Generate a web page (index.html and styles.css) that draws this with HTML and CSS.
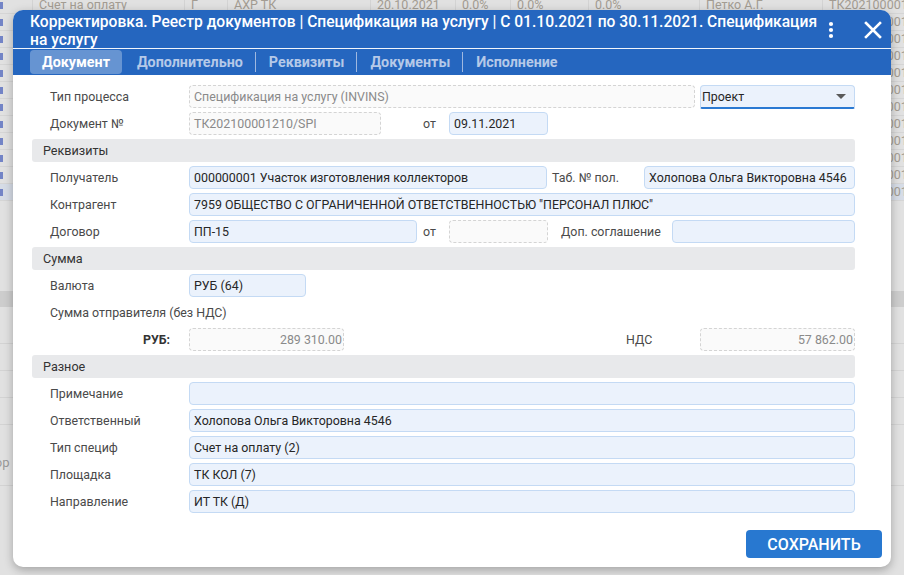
FILE: index.html
```html
<!DOCTYPE html>
<html lang="ru">
<head>
<meta charset="utf-8">
<title>Корректировка</title>
<link rel="stylesheet" href="styles.css">
</head>
<body>
<div class="page">
  <div class="grid">
    <div class="grow"><span class="mk"></span><span>Счет на оплату</span><span>Г</span><span>АХР ТК</span><span>20.10.2021</span><span>0.0%</span><span>0.0%</span><span>0.0%</span><span>Петко А.Г.</span><span>ТК202100001</span></div>
    <div class="grow"><span class="mk"></span><span>Счет на оплату</span><span>Г</span><span>АХР ТК</span><span>20.10.2021</span><span>0.0%</span><span>0.0%</span><span>0.0%</span><span>Петко А.Г.</span><span>ТК202100001</span></div>
    <div class="grow"><span class="mk"></span><span>Счет на оплату</span><span>Г</span><span>АХР ТК</span><span>20.10.2021</span><span>0.0%</span><span>0.0%</span><span>0.0%</span><span>Петко А.Г.</span><span>ТК202100001</span></div>
    <div class="grow"><span class="mk"></span><span>Счет на оплату</span><span>Г</span><span>АХР ТК</span><span>20.10.2021</span><span>0.0%</span><span>0.0%</span><span>0.0%</span><span>Петко А.Г.</span><span>ТК202100001</span></div>
    <div class="grow"><span class="mk"></span><span>Счет на оплату</span><span>Г</span><span>АХР ТК</span><span>20.10.2021</span><span>0.0%</span><span>0.0%</span><span>0.0%</span><span>Петко А.Г.</span><span>ТК202100001</span></div>
    <div class="grow"><span class="mk"></span><span>Счет на оплату</span><span>Г</span><span>АХР ТК</span><span>20.10.2021</span><span>0.0%</span><span>0.0%</span><span>0.0%</span><span>Петко А.Г.</span><span>ТК202100001</span></div>
    <div class="grow"><span class="mk"></span><span>Счет на оплату</span><span>Г</span><span>АХР ТК</span><span>20.10.2021</span><span>0.0%</span><span>0.0%</span><span>0.0%</span><span>Петко А.Г.</span><span>ТК202100001</span></div>
    <div class="grow"><span class="mk"></span><span>Счет на оплату</span><span>Г</span><span>АХР ТК</span><span>20.10.2021</span><span>0.0%</span><span>0.0%</span><span>0.0%</span><span>Петко А.Г.</span><span>ТК202100001</span></div>
    <div class="grow"><span class="mk"></span><span>Счет на оплату</span><span>Г</span><span>АХР ТК</span><span>20.10.2021</span><span>0.0%</span><span>0.0%</span><span>0.0%</span><span>Петко А.Г.</span><span>ТК202100001</span></div>
    <div class="grow"><span class="mk"></span><span>Счет на оплату</span><span>Г</span><span>АХР ТК</span><span>20.10.2021</span><span>0.0%</span><span>0.0%</span><span>0.0%</span><span>Петко А.Г.</span><span>ТК202100001</span></div>
    <div class="grow"><span class="mk"></span><span>Счет на оплату</span><span>Г</span><span>АХР ТК</span><span>20.10.2021</span><span>0.0%</span><span>0.0%</span><span>0.0%</span><span>Петко А.Г.</span><span>ТК202100001</span></div>
    <div class="grow sel"><span class="mk"></span><span>Счет на оплату</span><span>Г</span><span>АХР ТК</span><span>20.10.2021</span><span>0.0%</span><span>0.0%</span><span>0.0%</span><span>Петко А.Г.</span><span>ТК202100001</span></div>
  </div>
  <div class="band"></div>
  <div class="lower">
    <div class="lrow"></div>
    <div class="lrow"></div>
    <div class="lrow"></div>
    <div class="lrow"></div>
    <div class="lrow tall"><span class="cut">Автор</span></div>
  </div>
</div>

<div class="modal">
  <div class="head">
    <div class="title">Корректировка. Реестр документов | Спецификация на услугу | С 01.10.2021 по 30.11.2021. Спецификация на услугу</div>
    <div class="hicons">
      <svg class="dots" width="6" height="18" viewBox="0 0 6 18"><circle cx="3" cy="3" r="2.1" fill="#fff"/><circle cx="3" cy="9" r="2.1" fill="#fff"/><circle cx="3" cy="15" r="2.1" fill="#fff"/></svg>
      <svg class="close" width="18" height="18" viewBox="0 0 18 18"><path d="M2 2 L16 16 M16 2 L2 16" stroke="#fff" stroke-width="2.6" stroke-linecap="square"/></svg>
    </div>
  </div>
  <div class="tabs">
    <div class="tab active">Документ</div>
    <div class="tab second">Дополнительно</div>
    <div class="sep"></div>
    <div class="tab">Реквизиты</div>
    <div class="sep"></div>
    <div class="tab">Документы</div>
    <div class="sep"></div>
    <div class="tab">Исполнение</div>
  </div>
  <div class="body">
    <div class="row">
      <div class="lbl">Тип процесса</div>
      <div class="inp dis w506">Спецификация на услугу (INVINS)</div>
      <div class="select">Проект<span class="arrow"></span></div>
    </div>
    <div class="row">
      <div class="lbl">Документ №</div>
      <div class="inp dis w192">ТК202100001210/SPI</div>
      <div class="mid ot1">от</div>
      <div class="inp w99">09.11.2021</div>
    </div>
    <div class="section">Реквизиты</div>
    <div class="row">
      <div class="lbl">Получатель</div>
      <div class="inp w358">000000001 Участок изготовления коллекторов</div>
      <div class="mid tab-no">Таб. № пол.</div>
      <div class="inp grow1">Холопова Ольга Викторовна 4546</div>
    </div>
    <div class="row">
      <div class="lbl">Контрагент</div>
      <div class="inp grow1">7959 ОБЩЕСТВО С ОГРАНИЧЕННОЙ ОТВЕТСТВЕННОСТЬЮ "ПЕРСОНАЛ ПЛЮС"</div>
    </div>
    <div class="row">
      <div class="lbl">Договор</div>
      <div class="inp w228">ПП-15</div>
      <div class="mid ot2">от</div>
      <div class="inp dis w99"></div>
      <div class="mid dop">Доп. соглашение</div>
      <div class="inp grow1"></div>
    </div>
    <div class="section">Сумма</div>
    <div class="row">
      <div class="lbl">Валюта</div>
      <div class="inp w117">РУБ (64)</div>
    </div>
    <div class="row">
      <div class="lbl wide">Сумма отправителя (без НДС)</div>
    </div>
    <div class="row">
      <div class="lbl strong">РУБ:</div>
      <div class="inp dis w155 num">289 310.00</div>
      <div class="mid nds">НДС</div>
      <div class="inp dis w155 num">57 862.00</div>
    </div>
    <div class="section">Разное</div>
    <div class="row">
      <div class="lbl">Примечание</div>
      <div class="inp grow1"></div>
    </div>
    <div class="row">
      <div class="lbl">Ответственный</div>
      <div class="inp grow1">Холопова Ольга Викторовна 4546</div>
    </div>
    <div class="row">
      <div class="lbl">Тип специф</div>
      <div class="inp grow1">Счет на оплату (2)</div>
    </div>
    <div class="row">
      <div class="lbl">Площадка</div>
      <div class="inp grow1">ТК КОЛ (7)</div>
    </div>
    <div class="row">
      <div class="lbl">Направление</div>
      <div class="inp grow1">ИТ ТК (Д)</div>
    </div>
  </div>
  <div class="foot">
    <button class="save">СОХРАНИТЬ</button>
  </div>
</div>
</body>
</html>
```

FILE: styles.css
```css
html, body {
  margin: 0;
  padding: 0;
}
body {
  width: 904px;
  height: 575px;
  overflow: hidden;
  position: relative;
  background: #e1e1e1;
  font-family: Roboto, "Liberation Sans", sans-serif;
}

/* background page (dimmed) */
.page {
  margin-top: -3px;
}
.grid {
  display: flex;
  flex-direction: column;
}
.grow {
  display: grid;
  grid-template-columns: 32px 152px 43px 143px 85px 55px 78px 111px 123px 1fr;
  height: 17px;
  border-bottom: 1px solid #d5d5d5;
  box-sizing: border-box;
  font-size: 12.5px;
  line-height: 16px;
  color: #a39c92;
  white-space: nowrap;
}
.grow span {
  padding-left: 6px;
  border-left: 1px solid #d3d3d3;
  overflow: hidden;
}
.grow span.mk {
  border-left: none;
  padding: 0;
  position: relative;
}
.grow span.mk::before {
  content: "";
  position: absolute;
  left: 0;
  top: 5px;
  width: 3px;
  height: 7px;
  background: #7384c6;
}
.grow.sel {
  background: #d6dce6;
}
.band {
  margin-top: 90px;
  height: 16px;
  background: #cdcdcd;
}
.lower {
  display: flex;
  flex-direction: column;
  padding-top: 10px;
}
.lrow {
  height: 26px;
  border-bottom: 1px solid #d3d3d3;
}
.lrow.tall {
  height: 60px;
  position: relative;
}
.cut {
  position: absolute;
  left: -27px;
  top: 30px;
  font-size: 13px;
  color: #9a9a9a;
}

/* modal */
.modal {
  position: absolute;
  left: 13px;
  top: 10px;
  width: 878px;
  height: 557px;
  background: #fff;
  border-radius: 10px;
  overflow: hidden;
  box-shadow: 0 3px 10px rgba(0, 0, 0, 0.28);
  display: flex;
  flex-direction: column;
}
.head {
  height: 39px;
  box-sizing: border-box;
  background: #2566bf;
  border-bottom: 1px solid #f2f6fc;
  display: flex;
  align-items: flex-start;
  padding: 2px 9px 0 17px;
}
.title {
  flex: 1;
  color: #fff;
  font-size: 15.6px;
  line-height: 18px;
  font-weight: 500;
  padding-top: 1px;
}
.hicons {
  width: 54px;
  display: flex;
  align-items: center;
  justify-content: space-between;
  padding-top: 9px;
  padding-left: 3px;
}
.tabs {
  height: 26px;
  background: #2566bf;
  display: flex;
  align-items: center;
  gap: 1px;
  padding-left: 17px;
}
.tab {
  height: 24px;
  line-height: 24px;
  padding: 0 11px 0 12px;
  font-size: 14.3px;
  font-weight: 700;
  color: #b5c9e8;
  border-radius: 4px;
}
.tab.second {
  margin-left: 2px;
}
.tab.active {
  background: rgba(255, 255, 255, 0.3);
  color: #fff;
  padding: 0 12px 0 12px;
}
.sep {
  width: 1px;
  height: 20px;
  background: #9fb8e0;
}

.body {
  padding: 10px 36px 0 19px;
  display: flex;
  flex-direction: column;
}
.row {
  display: flex;
  align-items: center;
  height: 23px;
  margin-bottom: 4px;
}
.lbl {
  flex: none;
  width: 157px;
  padding-left: 18px;
  box-sizing: border-box;
  font-size: 12.4px;
  color: #4a4a4a;
  white-space: nowrap;
}
.lbl.wide {
  width: auto;
}
.lbl.strong {
  text-align: right;
  padding-right: 19px;
  font-weight: 700;
  color: #333;
}
.mid {
  flex: none;
  box-sizing: border-box;
  font-size: 12.4px;
  color: #4a4a4a;
  white-space: nowrap;
}
.ot1 { width: 68px; padding-left: 42px; }
.ot2 { width: 32px; padding-left: 6px; }
.tab-no { width: 97px; padding-left: 5px; }
.dop { width: 124px; padding-left: 13px; }
.nds { width: 74px; margin-left: auto; }

.inp {
  flex: none;
  height: 23px;
  box-sizing: border-box;
  border: 1px solid #c4daf4;
  background: #ebf2fc;
  border-radius: 4px;
  padding: 0 4px;
  font-size: 12.4px;
  line-height: 21px;
  color: #262626;
  white-space: nowrap;
  overflow: hidden;
}
.inp.dis {
  border: 1px dashed #d4d4d4;
  background: #fafafa;
  color: #8a8a8a;
}
.inp.num {
  text-align: right;
  padding-right: 1px;
}
.w506 { width: 506px; }
.w192 { width: 192px; }
.w99 { width: 99px; }
.w358 { width: 358px; }
.w228 { width: 228px; }
.w117 { width: 117px; }
.w155 { width: 155px; }
.grow1 { flex: 1; }

.select {
  flex: none;
  position: relative;
  width: 155px;
  height: 24px;
  margin-left: 5px;
  box-sizing: border-box;
  background: #ebf2fc;
  border: 1px solid #c4daf4;
  border-bottom: 2px solid #2a79d2;
  border-radius: 4px 4px 2px 2px;
  padding-left: 1px;
  font-size: 12.4px;
  line-height: 21px;
  color: #262626;
  align-self: flex-start;
}
.arrow {
  position: absolute;
  right: 8px;
  top: 8px;
  width: 0;
  height: 0;
  border-left: 5px solid transparent;
  border-right: 5px solid transparent;
  border-top: 5px solid #5a5a5a;
}

.section {
  height: 23px;
  line-height: 23px;
  background: #e8e9eb;
  border-radius: 3px;
  padding-left: 11px;
  font-size: 12.6px;
  color: #333;
  margin-bottom: 4px;
}

.foot {
  display: flex;
  justify-content: flex-end;
  padding: 13px 9px 0 0;
}
.save {
  width: 136px;
  height: 28px;
  border: none;
  border-radius: 4px;
  background: #2878d0;
  color: #fff;
  font-family: Roboto, "Liberation Sans", sans-serif;
  font-size: 16px;
  font-weight: 500;
  padding: 0;
}
```
